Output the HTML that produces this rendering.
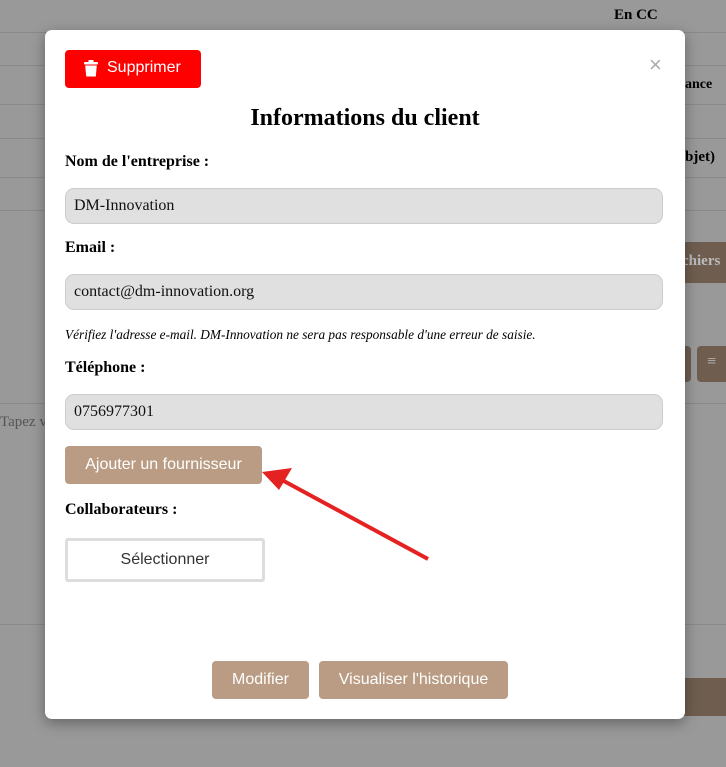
<!DOCTYPE html>
<html><head><meta charset="utf-8"><style>
*{margin:0;padding:0;box-sizing:border-box}
body{width:726px;height:767px;background:#999;position:relative;overflow:hidden;font-family:"Liberation Serif",serif}
.ln{position:absolute;left:0;width:726px;height:1px;background:#8a8a8a}
.abs{position:absolute}
.modal{position:absolute;left:45px;top:30px;width:640px;height:689px;background:#fff;border-radius:7px;box-shadow:0 4px 14px rgba(0,0,0,.35)}
.lbl{position:absolute;left:20px;font-weight:bold;font-size:16px;color:#000}
.inp{position:absolute;left:20px;width:598px;height:36px;background:#e0e0e0;border:1px solid #ccc;border-radius:9px;font-size:16px;padding:8px 0 0 8px;color:#111}
.btn{position:absolute;background:#b99c83;color:#fff;font-family:"Liberation Sans",sans-serif;font-size:16px;border-radius:4px;text-align:center}
</style></head><body>
<div class="ln" style="top:32px"></div>
<div class="ln" style="top:65px"></div>
<div class="ln" style="top:104px"></div>
<div class="ln" style="top:138px"></div>
<div class="ln" style="top:177px"></div>
<div class="ln" style="top:210px"></div>
<div class="ln" style="top:403px"></div>
<div class="ln" style="top:624px"></div>
<div class="abs" style="left:614px;top:7px;font-weight:bold;font-size:15px">En CC</div>
<div class="abs" style="left:685px;top:77px;font-weight:bold;font-size:14px">ance</div>
<div class="abs" style="left:685px;top:149px;font-weight:bold;font-size:15px">bjet)</div>
<div class="abs" style="left:680px;top:242px;width:60px;height:41px;background:#6f5e50;border-radius:4px;color:#bbb;font-size:15px;padding:11px 0 0 2px;font-weight:bold">chiers</div>
<div class="abs" style="left:660px;top:346px;width:31px;height:36px;background:#6f5e50;border-radius:4px"></div>
<div class="abs" style="left:697px;top:346px;width:40px;height:36px;background:#6f5e50;border-radius:4px;color:#bbb;font-size:16px;padding:7px 0 0 10px">≡</div>
<div class="abs" style="left:0;top:414px;font-size:15px;color:#555">Tapez v</div>
<div class="abs" style="left:680px;top:678px;width:60px;height:38px;background:#6f5e50"></div>
<div class="modal">
 <div class="abs" style="left:20px;top:20px;width:136px;height:38px;background:#f00;border-radius:4px;color:#fff;font-family:'Liberation Sans',sans-serif;font-size:16px;padding:9px 0 0 42px">Supprimer
  <svg class="abs" style="left:19px;top:10px" width="14" height="17" viewBox="0 0 14 17"><rect x="4.5" y="0" width="5" height="2" fill="#fff"/><rect x="0" y="2" width="14" height="2.5" rx="1" fill="#fff"/><path d="M1.2 5.5h11.6l-1 11H2.2z" fill="#fff"/></svg></div>
 <div class="abs" style="left:604px;top:22px;color:#aaa;font-family:'Liberation Sans',sans-serif;font-size:22px">×</div>
 <div class="abs" style="left:0;width:640px;top:75px;text-align:center;font-weight:bold;font-size:24px">Informations du client</div>
 <div class="lbl" style="top:123px">Nom de l'entreprise :</div>
 <div class="inp" style="top:158px">DM-Innovation</div>
 <div class="lbl" style="top:209px">Email :</div>
 <div class="inp" style="top:244px">contact@dm-innovation.org</div>
 <div class="abs" style="left:20px;top:297px;font-style:italic;font-size:13.3px">Vérifiez l'adresse e-mail. DM-Innovation ne sera pas responsable d'une erreur de saisie.</div>
 <div class="lbl" style="top:329px">Téléphone :</div>
 <div class="inp" style="top:364px">0756977301</div>
 <div class="btn" style="left:20px;top:416px;width:197px;height:38px;padding-top:10px">Ajouter un fournisseur</div>
 <div class="lbl" style="top:471px">Collaborateurs :</div>
 <div class="abs" style="left:20px;top:508px;width:200px;height:44px;border:3px solid #ddd;border-radius:3px;text-align:center;font-family:'Liberation Sans',sans-serif;font-size:16px;color:#333;padding-top:10px">Sélectionner</div>
 <div class="btn" style="left:167px;top:631px;width:97px;height:38px;padding-top:10px">Modifier</div>
 <div class="btn" style="left:274px;top:631px;width:189px;height:38px;padding-top:10px">Visualiser l'historique</div>
</div>
<svg class="abs" style="left:0;top:0" width="726" height="767"><line x1="428" y1="559" x2="282" y2="480" stroke="#e52222" stroke-width="4"/><path d="M262 472 L292 468 L279 490 Z" fill="#e52222"/></svg>
</body></html>
